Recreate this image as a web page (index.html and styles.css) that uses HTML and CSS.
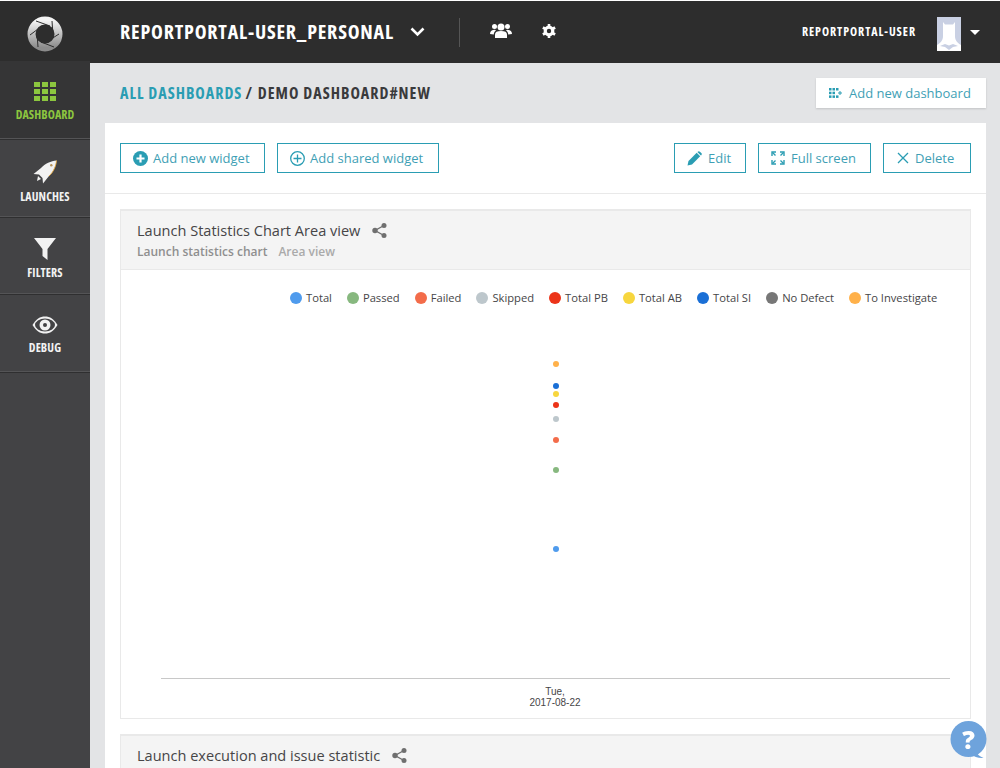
FILE: index.html
```html
<!DOCTYPE html>
<html lang="en">
<head>
  <meta charset="UTF-8">
  <title>Report Portal</title>
  <link rel="stylesheet" href="styles.css">
</head>
<body>

  <!-- Sidebar -->
  <aside class="sidebar">
    <div class="logo">
      <svg width="38" height="36" viewBox="0 0 38 36">
        <defs>
          <linearGradient id="lens" x1="0" y1="0" x2="0" y2="1">
            <stop offset="0" stop-color="#f4f4f4"/>
            <stop offset="1" stop-color="#8c8c8c"/>
          </linearGradient>
        </defs>
        <circle cx="19" cy="18" r="13.5" fill="none" stroke="url(#lens)" stroke-width="8"/>
        <g stroke="#2d2d2d" stroke-width="1">
          <path d="M26 5 L27 19"/>
          <path d="M33 18 L22 25"/>
          <path d="M28 31 L15 26"/>
          <path d="M12 31 L11 17"/>
          <path d="M4 19 L16 10"/>
          <path d="M10 5 L24 10"/>
        </g>
      </svg>
    </div>
    <a class="nav-item active">
      <svg width="22" height="19" viewBox="0 0 22 19" fill="#8cc63f">
        <rect x="0" y="0" width="6" height="5"/><rect x="8" y="0" width="6" height="5"/><rect x="16" y="0" width="6" height="5"/>
        <rect x="0" y="7" width="6" height="5"/><rect x="8" y="7" width="6" height="5"/><rect x="16" y="7" width="6" height="5"/>
        <rect x="0" y="14" width="6" height="5"/><rect x="8" y="14" width="6" height="5"/><rect x="16" y="14" width="6" height="5"/>
      </svg>
      <span>DASHBOARD</span>
    </a>
    <a class="nav-item launches">
      <svg width="24" height="24" viewBox="0 0 24 24">
        <path d="M23.500 0.500 C18 1 12 3.500 8 8 L0.500 14 L6 14.500 L9.500 18 L10 23.500 L16 16 C20.500 12 23 6 23.500 0.500Z" fill="#f2f2f2"/>
        <path d="M23.500 0.500 C23 6 20.500 12 16 16" fill="none" stroke="#e8a93c" stroke-width="0.900"/>
        <circle cx="18.300" cy="5.200" r="1.200" fill="#b9935a"/>
        <path d="M5 16 L8 19 L4 21Z" fill="#f2f2f2"/>
      </svg>
      <span>LAUNCHES</span>
    </a>
    <a class="nav-item filters">
      <svg width="22" height="22" viewBox="0 0 22 22"><path d="M0 0 H22 L13.500 11 V22 L8.500 18 V11Z" fill="#f2f2f2"/></svg>
      <span>FILTERS</span>
    </a>
    <a class="nav-item debug">
      <svg width="26" height="18" viewBox="0 0 26 18">
        <path d="M0.500 9 C4 3 8 0.500 13 0.500 S22 3 25.500 9 C22 15 18 17.500 13 17.500 S4 15 0.500 9Z" fill="#f2f2f2"/>
        <ellipse cx="13" cy="9" rx="10" ry="6.500" fill="#434345"/>
        <circle cx="13" cy="9" r="5.500" fill="#f2f2f2"/>
        <circle cx="13" cy="9" r="2" fill="#434345"/>
      </svg>
      <span>DEBUG</span>
    </a>
  </aside>

  <div class="page">
    <!-- Header -->
    <header class="topbar">
      <div class="project">REPORTPORTAL-USER_PERSONAL</div>
      <svg class="chevron" width="15" height="10" viewBox="0 0 15 10"><path d="M1.500 1.500 L7.500 7.500 L13.500 1.500" fill="none" stroke="#fff" stroke-width="2.600"/></svg>
      <div class="divider"></div>
      <svg class="ic-users" width="22" height="15" viewBox="0 0 22 15" fill="#fff">
        <circle cx="11" cy="4" r="3.500"/><circle cx="4.500" cy="3.500" r="2.500"/><circle cx="17.500" cy="3.500" r="2.500"/>
        <path d="M5 15 V11.500 C5 9 7 8 11 8 S17 9 17 11.500 V15Z"/>
        <path d="M0 11 C0 8 2 6.800 5 6.800 L6 7.500 C4.500 8.500 3.800 9.500 3.800 11.500Z M22 11 C22 8 20 6.800 17 6.800 L16 7.500 C17.500 8.500 18.200 9.500 18.200 11.500Z"/>
      </svg>
      <svg class="ic-gear" width="14" height="14" viewBox="0 0 14 14">
        <circle cx="7" cy="7" r="3.800" fill="none" stroke="#fff" stroke-width="3.200"/>
        <g stroke="#fff" stroke-width="2.600"><path d="M7 0 V3"/><path d="M7 11 V14"/><path d="M0.900 3.500 L3.500 5"/><path d="M10.500 9 L13.100 10.500"/><path d="M0.900 10.500 L3.500 9"/><path d="M10.500 5 L13.100 3.500"/></g>
      </svg>
      <div class="user-name">REPORTPORTAL-USER</div>
      <div class="avatar">
        <svg width="24" height="34" viewBox="0 0 24 34">
          <rect width="24" height="34" fill="#c9d0e3"/>
          <path d="M6 5 L8 7.500 H16 L18 5 V19 C18 22 19 25 24 28 V34 H0 V28 C5 25 6 22 6 19Z" fill="#fff"/>
          <path d="M3 29 L8 27 L12 28.500 L16 27 L21 29 L16 30 L12 33 L8 30Z" fill="#c9d0e3"/>
        </svg>
      </div>
      <div class="caret"></div>
    </header>

    <main class="main">
      <div class="crumbs-row">
        <div class="crumbs"><a class="crumb-link">ALL DASHBOARDS</a><span class="crumb-sep">/</span><span>DEMO DASHBOARD#NEW</span></div>
        <a class="add-dashboard">
          <svg width="13" height="10" viewBox="0 0 13 10" fill="#2a9db3">
            <rect x="0" y="0" width="2.500" height="2.500"/><rect x="3.500" y="0" width="2.500" height="2.500"/><rect x="7" y="0" width="2.500" height="2.500"/>
            <rect x="0" y="3.700" width="2.500" height="2.500"/><rect x="3.500" y="3.700" width="2.500" height="2.500"/>
            <rect x="0" y="7.400" width="2.500" height="2.500"/><rect x="3.500" y="7.400" width="2.500" height="2.500"/><rect x="7" y="7.400" width="2.500" height="2.500"/>
            <path d="M9 4.500 H13 V5.500 H9Z M10.500 3 H11.500 V7 H10.500Z"/>
          </svg>
          Add new dashboard
        </a>
      </div>

      <section class="panel">
        <div class="toolbar">
          <a class="btn btn-new">
            <svg width="15" height="15" viewBox="0 0 15 15"><circle cx="7.500" cy="7.500" r="7.500" fill="#2a9db3"/><path d="M7.500 3.500 V11.500 M3.500 7.500 H11.500" stroke="#fff" stroke-width="2.200"/></svg>
            Add new widget
          </a>
          <a class="btn btn-shared">
            <svg width="15" height="15" viewBox="0 0 15 15"><circle cx="7.500" cy="7.500" r="6.800" fill="none" stroke="#2a9db3" stroke-width="1.300"/><path d="M7.500 3.500 V11.500 M3.500 7.500 H11.500" stroke="#2a9db3" stroke-width="1.300"/></svg>
            Add shared widget
          </a>
          <div class="toolbar-gap"></div>
          <a class="btn btn-edit">
            <svg width="15" height="15" viewBox="0 0 15 15" fill="#2a9db3"><path d="M0.500 14.500 L1.500 10 L9.700 1.800 L13.200 5.300 L5 13.500Z"/><path d="M10.800 0.700 C11.500 0 12.200 0 12.900 0.700 L14.300 2.100 C15 2.800 15 3.500 14.300 4.200 L13.900 4.600 L10.400 1.100Z"/></svg>
            Edit
          </a>
          <a class="btn btn-full">
            <svg width="14" height="14" viewBox="0 0 14 14" fill="none" stroke="#2a9db3" stroke-width="1.400"><path d="M1 5 V1 H5"/><path d="M9 1 H13 V5"/><path d="M13 9 V13 H9"/><path d="M5 13 H1 V9"/><path d="M1.500 1.500 L4.500 4.500 M12.500 1.500 L9.500 4.500 M12.500 12.500 L9.500 9.500 M1.500 12.500 L4.500 9.500"/></svg>
            Full screen
          </a>
          <a class="btn btn-delete">
            <svg width="12" height="12" viewBox="0 0 12 12"><path d="M1 1 L11 11 M11 1 L1 11" stroke="#2a9db3" stroke-width="1.300"/></svg>
            Delete
          </a>
        </div>

        <div class="widgets">
          <article class="widget">
            <div class="widget-head">
              <div class="widget-title">Launch Statistics Chart Area view
                <svg class="share" width="15" height="15" viewBox="0 0 15 15"><path d="M12 2.500 L3 7.500 L12 12.500" fill="none" stroke="#6f6f6f" stroke-width="1.400"/><circle cx="12" cy="2.500" r="2.500" fill="#6f6f6f"/><circle cx="3" cy="7.500" r="2.700" fill="#6f6f6f"/><circle cx="12" cy="12.500" r="2.500" fill="#6f6f6f"/></svg>
              </div>
              <div class="widget-sub"><span class="sub-type">Launch statistics chart</span><span class="sub-view">Area view</span></div>
            </div>
            <div class="widget-body">
              <ul class="legend">
                <li><i class="swatch c-total"></i>Total</li>
                <li><i class="swatch c-passed"></i>Passed</li>
                <li><i class="swatch c-failed"></i>Failed</li>
                <li><i class="swatch c-skipped"></i>Skipped</li>
                <li><i class="swatch c-pb"></i>Total PB</li>
                <li><i class="swatch c-ab"></i>Total AB</li>
                <li><i class="swatch c-si"></i>Total SI</li>
                <li><i class="swatch c-nd"></i>No Defect</li>
                <li><i class="swatch c-ti"></i>To Investigate</li>
              </ul>
              <i class="point c-ti" style="top: 90.500px"></i>
              <i class="point c-si" style="top: 112.500px"></i>
              <i class="point c-ab" style="top: 120.500px"></i>
              <i class="point c-pb" style="top: 131.500px"></i>
              <i class="point c-skipped" style="top: 145.500px"></i>
              <i class="point c-failed" style="top: 166.500px"></i>
              <i class="point c-passed" style="top: 196.500px"></i>
              <i class="point c-total" style="top: 275.500px"></i>
              <div class="axis"></div>
              <div class="tick">Tue,<br>2017-08-22</div>
            </div>
          </article>

          <article class="widget">
            <div class="widget-head">
              <div class="widget-title">Launch execution and issue statistic
                <svg class="share" width="15" height="15" viewBox="0 0 15 15"><path d="M12 2.500 L3 7.500 L12 12.500" fill="none" stroke="#6f6f6f" stroke-width="1.400"/><circle cx="12" cy="2.500" r="2.500" fill="#6f6f6f"/><circle cx="3" cy="7.500" r="2.700" fill="#6f6f6f"/><circle cx="12" cy="12.500" r="2.500" fill="#6f6f6f"/></svg>
              </div>
            </div>
          </article>
        </div>
      </section>
    </main>
  </div>

  <!-- Help bubble -->
  <div class="help">
    <svg width="38" height="38" viewBox="0 0 38 38">
      <circle cx="18.500" cy="18" r="18" fill="#6ea3dc"/>
      <path d="M26 30 C27 33 29 35 33.500 37 C29 37.500 24 36 21 33Z" fill="#6ea3dc"/>
    </svg>
    <span>?</span>
  </div>

</body>
</html>
```

FILE: styles.css
```css
* {
  box-sizing: border-box;
}

html, body {
  height: 100%;
}

body {
  margin: 0;
  padding-top: 1px;
  display: flex;
  overflow: hidden;
  font-family: "Open Sans", sans-serif;
  background: #fff;
  color: #464547;
}

a {
  cursor: pointer;
}

/* Sidebar */
.sidebar {
  width: 90px;
  flex-shrink: 0;
  background: #434345;
  display: flex;
  flex-direction: column;
}

.logo {
  height: 60px;
  padding-top: 6px;
  background: #2d2d2d;
  display: flex;
  align-items: center;
  justify-content: center;
}

.nav-item {
  display: flex;
  flex-direction: column;
  align-items: center;
  border-bottom: 1px solid #2f2f30;
  box-shadow: inset 0 -1px 0 #545456;
  color: #f2f2f2;
  font-stretch: condensed;
  font-size: 12px;
  line-height: 14px;
  font-weight: 700;
  letter-spacing: 0.1px;
}

.nav-item.active {
  height: 79px;
  padding-top: 21px;
  gap: 7px;
  background: #353536;
  color: #8cc63f;
}

.nav-item.launches {
  height: 78px;
  padding-top: 20px;
  gap: 6px;
}

.nav-item.filters {
  height: 77px;
  padding-top: 20px;
  gap: 6px;
}

.nav-item.debug {
  height: 78px;
  padding-top: 21px;
  gap: 7px;
}

/* Header */
.page {
  flex: 1;
  min-width: 0;
  display: flex;
  flex-direction: column;
}

.topbar {
  height: 62px;
  flex-shrink: 0;
  background: #2d2d2d;
  display: flex;
  align-items: center;
  padding: 0 20px 0 30px;
  color: #fff;
}

.project {
  width: 273px;
  margin-top: -2px;
  font-stretch: condensed;
  font-size: 20px;
  font-weight: 700;
  letter-spacing: 0.8px;
  white-space: nowrap;
}

.chevron {
  margin-left: 17px;
}

.divider {
  width: 1px;
  height: 29px;
  background: #555;
  margin-left: 34px;
}

.ic-users {
  margin: -3px 0 0 30px;
}

.ic-gear {
  margin: -3px 0 0 30px;
}

.user-name {
  margin: -2px 0 0 auto;
  font-stretch: condensed;
  font-size: 12px;
  font-weight: 700;
  letter-spacing: 0.95px;
  white-space: nowrap;
}

.avatar {
  width: 24px;
  height: 34px;
  margin: 4px 0 0 21px;
}

.caret {
  margin-left: 9px;
  border-top: 5px solid #fff;
  border-left: 5px solid transparent;
  border-right: 5px solid transparent;
}

/* Main */
.main {
  flex: 1;
  background: #e3e4e6;
  padding: 0 14px 0 15px;
  min-height: 0;
}

.crumbs-row {
  height: 60px;
  display: flex;
  align-items: flex-start;
  justify-content: space-between;
}

.crumbs {
  margin: 19px 0 0 15px;
  font-stretch: condensed;
  font-size: 16px;
  font-weight: 700;
  letter-spacing: 1px;
  color: #3a3a3c;
  white-space: nowrap;
}

.crumb-link {
  color: #2a9db3;
}

.crumb-sep {
  margin: 0 5px 0 3px;
}

.add-dashboard {
  margin-top: 15px;
  width: 170px;
  height: 30px;
  padding-left: 13px;
  background: #fff;
  box-shadow: 0 1px 2px rgba(0, 0, 0, 0.15);
  display: flex;
  align-items: center;
  gap: 7px;
  font-size: 13px;
  color: #3f9fb5;
  white-space: nowrap;
}

.panel {
  background: #fff;
  height: 700px;
}

.toolbar {
  height: 71px;
  padding: 20px 15px 0;
  border-bottom: 1px solid #e9e9e9;
  display: flex;
  align-items: flex-start;
  gap: 12px;
}

.toolbar-gap {
  flex: 1;
}

.btn {
  height: 30px;
  padding-left: 12px;
  border: 1px solid #2a9db3;
  display: flex;
  align-items: center;
  gap: 5px;
  font-size: 13px;
  color: #3f9fb5;
  white-space: nowrap;
}

.btn-new {
  width: 145px;
}

.btn-shared {
  width: 162px;
}

.btn-edit {
  width: 72px;
  gap: 6px;
}

.btn-full {
  width: 113px;
  gap: 6px;
}

.btn-delete {
  width: 88px;
  padding-left: 13px;
  gap: 6px;
}

/* Widgets */
.widgets {
  padding: 15px 15px 0;
  display: flex;
  flex-direction: column;
  gap: 15px;
}

.widget {
  border: 1px solid #e9e9e9;
  flex-shrink: 0;
}

.widget-head {
  background: #f4f4f4;
  border-top: 1px solid #e9e9e9;
  border-bottom: 1px solid #e9e9e9;
  height: 60px;
  padding: 9px 16px 0;
}

.widget-title {
  font-size: 14.550px;
  font-weight: 500;
  line-height: 20px;
  color: #464547;
  display: flex;
  align-items: center;
  gap: 12px;
}

.share {
  flex-shrink: 0;
}

.widget-sub {
  margin-top: 3px;
  font-size: 12px;
  font-weight: 600;
  line-height: 17px;
  display: flex;
  gap: 11px;
  color: #8f8f8f;
}

.sub-view {
  color: #aaa;
}

.widget-body {
  position: relative;
  height: 448px;
}

.legend {
  list-style: none;
  margin: 0;
  padding: 21px 0 0 169px;
  display: flex;
  gap: 15px;
  font-size: 11.200px;
  line-height: 14px;
  color: #464547;
  white-space: nowrap;
}

.legend li {
  display: flex;
  align-items: center;
  gap: 4px;
}

.swatch {
  width: 12px;
  height: 12px;
  border-radius: 50%;
}

.point {
  position: absolute;
  left: 431.500px;
  width: 6px;
  height: 6px;
  border-radius: 50%;
}

.c-total { background: #4f9bed; }
.c-passed { background: #87b87f; }
.c-failed { background: #f36c4a; }
.c-skipped { background: #bdc7cc; }
.c-pb { background: #ec3419; }
.c-ab { background: #f7d63e; }
.c-si { background: #1a6fd6; }
.c-nd { background: #777; }
.c-ti { background: #ffb14a; }

.axis {
  position: absolute;
  left: 40px;
  right: 20px;
  top: 408px;
  height: 1px;
  background: #c8c8c8;
}

.tick {
  position: absolute;
  top: 416px;
  left: 384px;
  width: 100px;
  text-align: center;
  font-family: "Liberation Sans", sans-serif;
  font-size: 10px;
  line-height: 11px;
  color: #464547;
}

/* Help bubble */
.help {
  position: fixed;
  left: 950px;
  top: 721px;
  width: 38px;
  height: 38px;
}

.help svg {
  display: block;
}

.help span {
  position: absolute;
  left: 0;
  top: 0;
  width: 37px;
  height: 36px;
  line-height: 36px;
  text-align: center;
  font-size: 25px;
  font-weight: 800;
  color: #fff;
}
```
